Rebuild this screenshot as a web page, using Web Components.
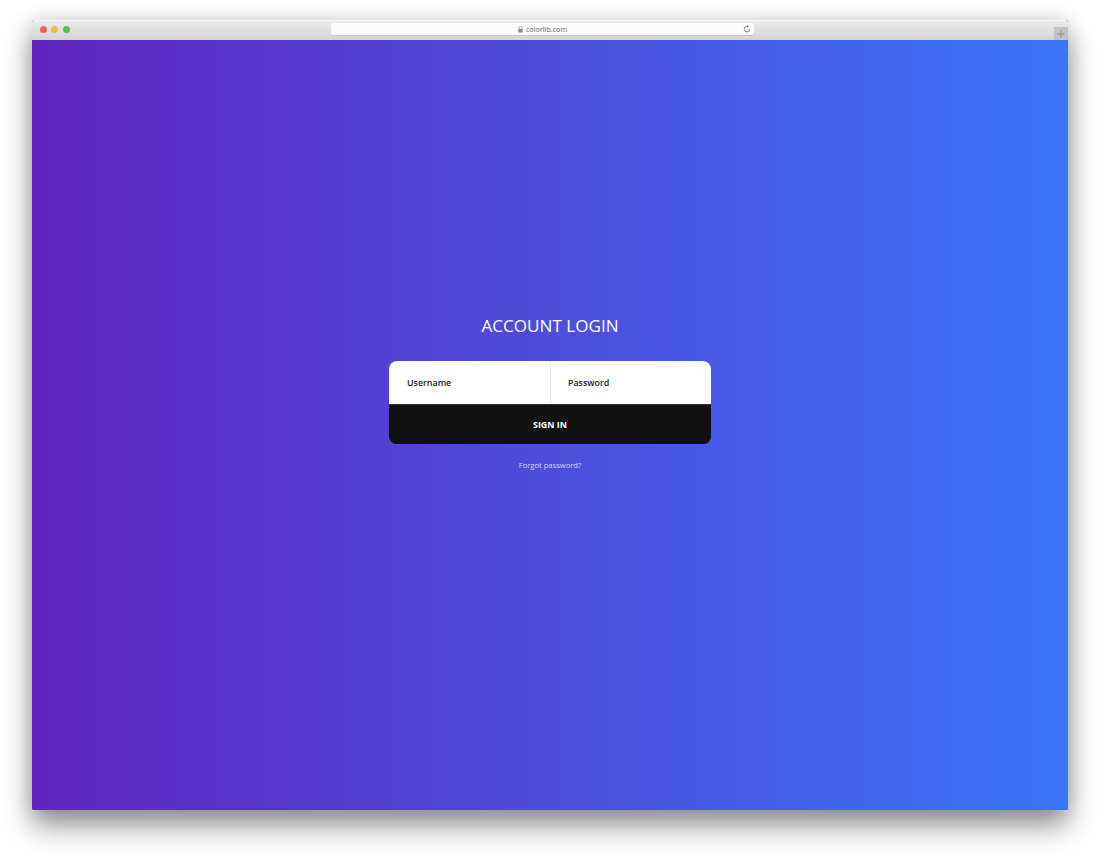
<!DOCTYPE html>
<html lang="en"><head><meta charset="utf-8"><title>Account Login</title>
<style>
html,body{margin:0;height:856px;background:#fff;overflow:hidden}
body{padding:20px 32px 46px;box-sizing:border-box;display:flex;font-family:"Open Sans",sans-serif}
browser-window{flex:1}
</style></head><body>
<browser-window url="colorlib.com">
  <login-card heading="ACCOUNT LOGIN"></login-card>
</browser-window>
<script>
class BrowserWindow extends HTMLElement{
  constructor(){super();const s=this.attachShadow({mode:'open'});
  s.innerHTML=`<style>
  :host{display:flex;flex-direction:column;height:790px;box-shadow:0 16px 28px rgba(0,0,0,.42),0 0 20px rgba(0,0,0,.14);border-radius:3px 3px 2px 2px;background:#5f25c0}
  .bar{height:20px;flex:none;display:grid;grid-template-columns:299px 423px 1fr;align-items:start;background:linear-gradient(#ebebeb,#d4d4d4);border-top:1px solid #f6f6f6;box-sizing:border-box;border-radius:3px 3px 0 0}
  .dots{display:flex;gap:4.5px;padding:5px 0 0 7.5px}
  .dots i{width:7px;height:7px;border-radius:50%;display:block}
  .url{height:12px;margin-top:2px;background:#fbfbfb;border-radius:2px;display:flex;align-items:center;justify-content:center;position:relative;font:7.2px "Open Sans",sans-serif;color:#666;gap:3px;box-shadow:0 1px 0 #c8c8c8}
  .url .re{position:absolute;right:3px;top:2px}
  .plus{justify-self:end;width:14px;height:13px;margin-top:6px;background:#c2c2c4;display:flex;align-items:center;justify-content:center}
  .page{flex:1;background:linear-gradient(to right,#6025c0,#3a75f8);display:flex;flex-direction:column;align-items:center;border-radius:0 0 2px 2px}
  </style>
  <div class="bar">
    <div class="dots"><i style="background:#e9605a"></i><i style="background:#f2b94c"></i><i style="background:#5cbf55"></i></div>
    <div class="url">
      <svg width="5" height="7" viewBox="0 0 5 7"><path d="M1 3V2a1.5 1.5 0 0 1 3 0v1" fill="none" stroke="#888" stroke-width=".7"/><rect x=".3" y="3" width="4.4" height="3.6" rx=".5" fill="#888"/></svg>
      <span></span>
      <svg class="re" width="8" height="8" viewBox="0 0 8 8"><path d="M4.2 1.4A2.8 2.8 0 1 0 6.8 4" fill="none" stroke="#777" stroke-width=".8"/><path d="M4 0l1.8 1.4L4 2.8z" fill="#777"/></svg>
    </div>
    <div class="plus"><svg width="8" height="8" viewBox="0 0 8 8"><path d="M4 .5v7M.5 4h7" stroke="#8b8b8d" stroke-width="1"/></svg></div>
  </div>
  <div class="page"><slot></slot></div>`;
  s.querySelector('.url span').textContent=this.getAttribute('url');}
}
class LoginCard extends HTMLElement{
  constructor(){super();const s=this.attachShadow({mode:'open'});
  s.innerHTML=`<style>
  :host{display:flex;flex-direction:column;align-items:center;width:322px;padding-top:274px;color:#fff;font-family:"Open Sans",sans-serif}
  h1{margin:0 0 23px;font-size:17.1px;font-weight:400;line-height:24px;white-space:nowrap}
  form{width:100%;margin:0;border-radius:8px;overflow:hidden;display:flex;flex-direction:column;background:#111}
  .row{display:grid;grid-template-columns:1fr 1fr;height:43px;background:#fff;border-bottom:1px solid #333}
  .f{display:flex;align-items:center;padding-left:18px;font-size:8.9px;font-weight:600;color:#222}
  .f+.f{border-left:1px solid #ececec;padding-left:17px}
  button{height:39px;border:0;padding:0;background:#111;color:#fff;font:700 8.9px "Open Sans",sans-serif}
  a{margin-top:16px;font-size:7.6px;line-height:11px;color:#ddd6f8;text-decoration:none}
  </style>
  <h1></h1>
  <form><div class="row"><div class="f">Username</div><div class="f">Password</div></div><button type="button">SIGN IN</button></form>
  <a href="#">Forgot password?</a>`;
  s.querySelector('h1').textContent=this.getAttribute('heading');}
}
customElements.define('browser-window',BrowserWindow);
customElements.define('login-card',LoginCard);
</script>
</body></html>
